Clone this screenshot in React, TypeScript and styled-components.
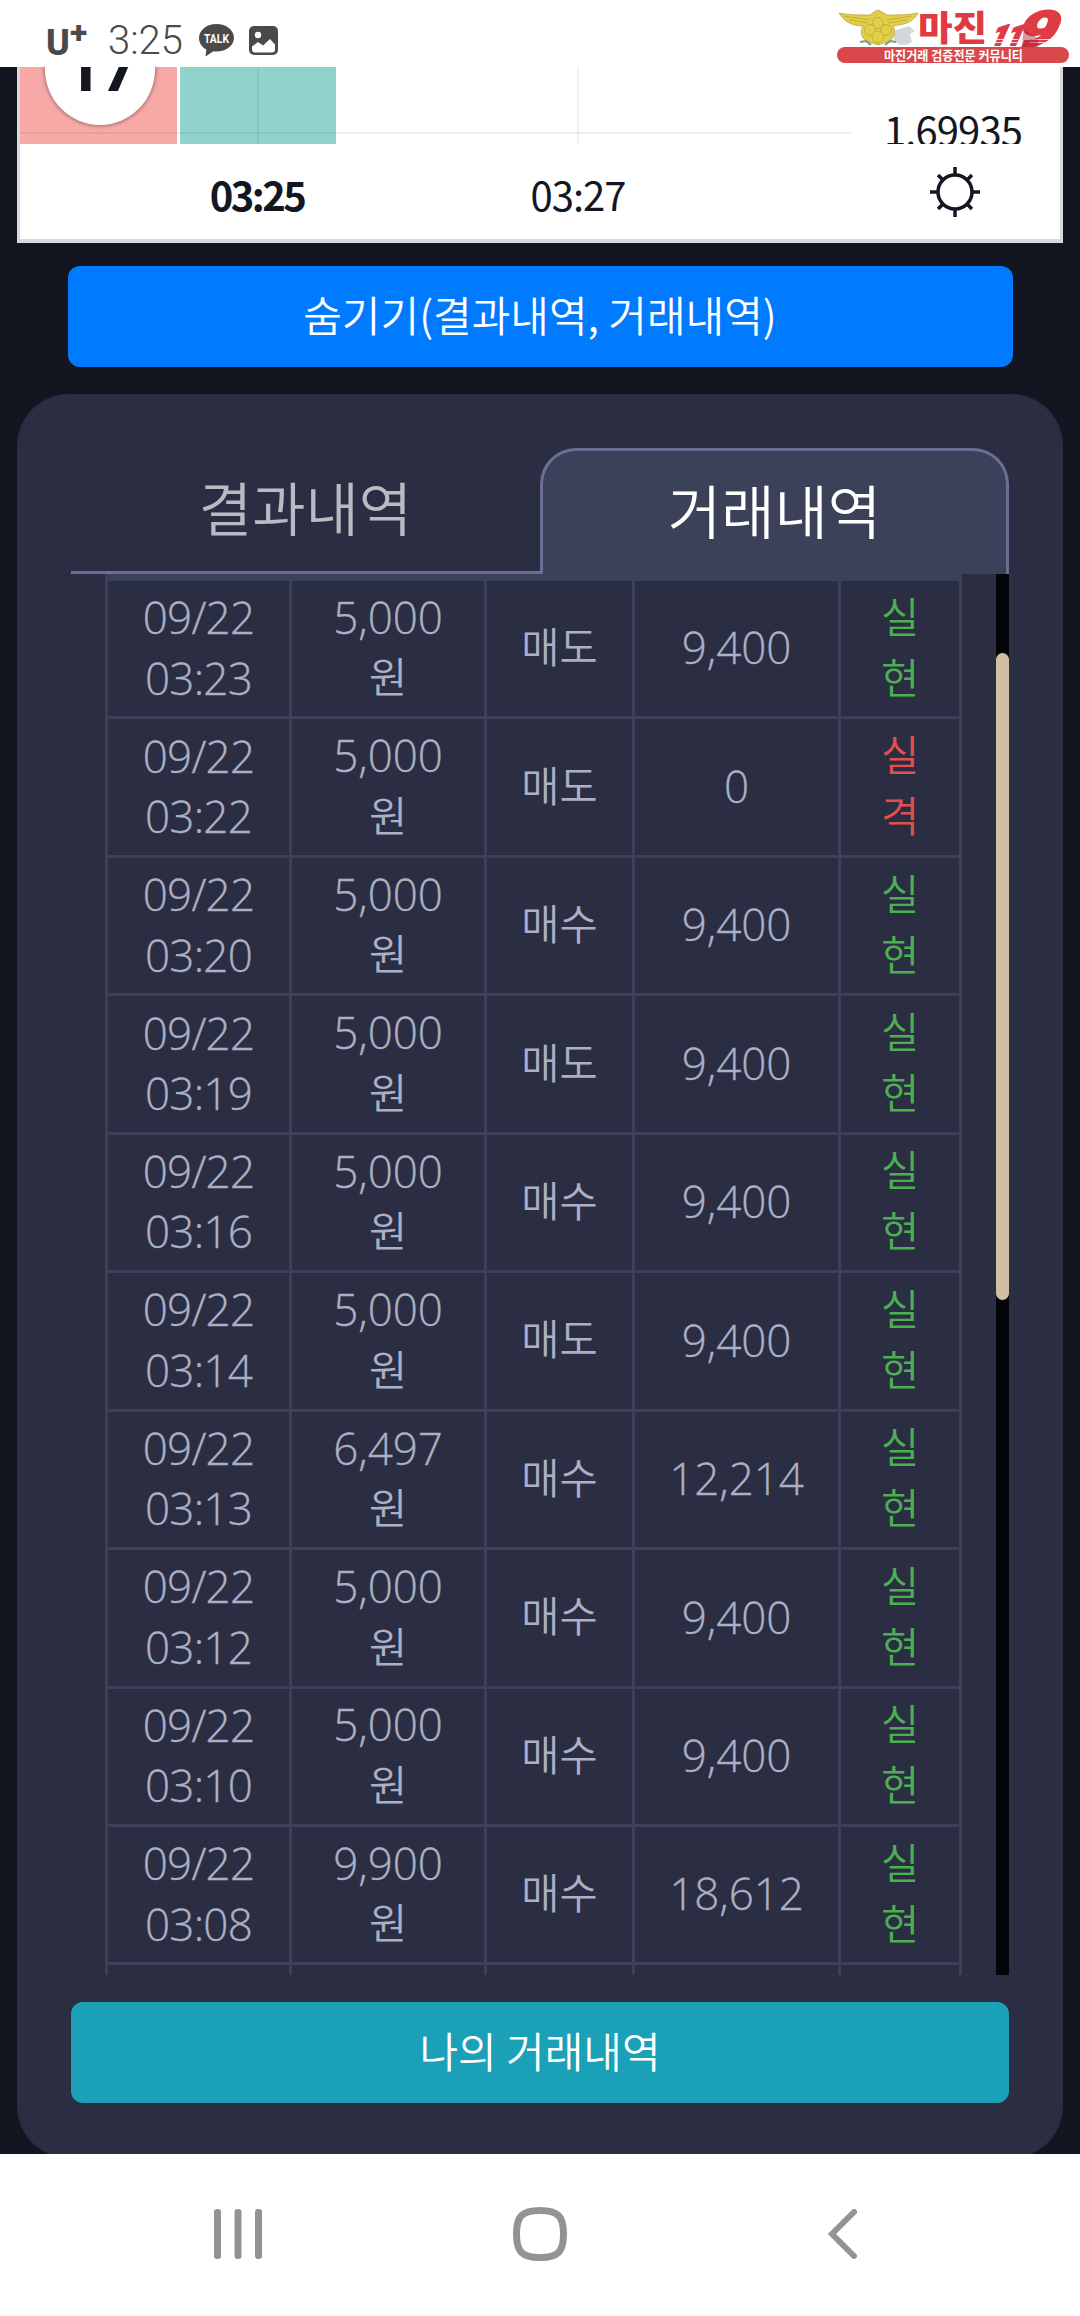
import { useState } from "react";
import styled, { createGlobalStyle } from "styled-components";

interface ITrade {
  time: string;
  amount: string;
  side: string;
  profit: string;
  isWin: boolean;
}

const trades: ITrade[] = [
  { time: "03:23", amount: "5,000", side: "매도", profit: "9,400", isWin: true },
  { time: "03:22", amount: "5,000", side: "매도", profit: "0", isWin: false },
  { time: "03:20", amount: "5,000", side: "매수", profit: "9,400", isWin: true },
  { time: "03:19", amount: "5,000", side: "매도", profit: "9,400", isWin: true },
  { time: "03:16", amount: "5,000", side: "매수", profit: "9,400", isWin: true },
  { time: "03:14", amount: "5,000", side: "매도", profit: "9,400", isWin: true },
  { time: "03:13", amount: "6,497", side: "매수", profit: "12,214", isWin: true },
  { time: "03:12", amount: "5,000", side: "매수", profit: "9,400", isWin: true },
  { time: "03:10", amount: "5,000", side: "매수", profit: "9,400", isWin: true },
  { time: "03:08", amount: "9,900", side: "매수", profit: "18,612", isWin: true },
];

const TalkIcon = () => (
  <svg width="35" height="33" viewBox="0 0 35 33">
    <path
      d="M17.5 0C7.800 0 0 6.200 0 14c0 4.900 2.900 9 7.300 11.600L6.500 32.500l8-5.200c1 .1 2 .2 3 .2 9.700 0 17.500-6 17.500-13.700S27.200 0 17.500 0z"
      fill="#4a4a4a"
    />
    <text
      x="17.500"
      y="18.500"
      textAnchor="middle"
      textLength="25"
      lengthAdjust="spacingAndGlyphs"
      fontFamily="Roboto, sans-serif"
      fontSize="12"
      fontWeight="700"
      fill="#fff"
    >
      TALK
    </text>
  </svg>
);

const PictureIcon = () => (
  <svg width="29" height="29" viewBox="0 0 29 29">
    <rect width="29" height="29" rx="5" fill="#4a4a4a" />
    <circle cx="9" cy="9" r="3.200" fill="#fff" />
    <path
      d="M3 20.500l6-4.500 5 3.500 7-6.500 5 5.500v5a3 3 0 0 1-3 3H6a3 3 0 0 1-3-3z"
      fill="#fff"
    />
  </svg>
);

const SunIcon = () => (
  <svg
    width="50"
    height="50"
    viewBox="-25 -25 50 50"
    fill="none"
    stroke="#131722"
    strokeWidth="3.500"
  >
    <circle r="17" />
    {[0, 45, 90, 135, 180, 225, 270, 315].map((angle) => (
      <path
        key={angle}
        d={angle % 90 ? "M0 -17V-24" : "M0 -17V-25"}
        transform={`rotate(${angle})`}
      />
    ))}
  </svg>
);

const CommunityLogo = () => (
  <svg width="234" height="58" viewBox="836 6 234 58" overflow="visible">
    <path d="M893 31l16-5 6 5-5 3 2 8c-8 5-15 3-18-2z" fill="#c9cdcf" opacity="0.800" />
    <g fill="#e3cf45" stroke="#b9a44a" strokeWidth="0.800">
      <path d="M839 13c9 2 20 2 31 2l4-3 4-2 4 2 5 3c11 0 22 0 31-2-3 6-8 9-14 11l-11 2c3 5 1 11-3 15l-12 4-12-4c-5-4-6-10-3-15-12 0-19-5-24-13z" />
      <circle cx="878" cy="23" r="5.500" />
      <circle cx="870" cy="30" r="5.500" />
      <circle cx="886" cy="30" r="5.500" />
      <circle cx="878" cy="37" r="6" />
      <path d="M844 16l25 4M849 20l19 3M912 16l-25 4M907 20l-19 3" fill="none" />
    </g>
    <path
      d="M860 42l6-1 5 4M896 42l-6-1-5 4"
      stroke="#7f9a78"
      strokeWidth="2"
      fill="none"
    />
    <text
      x="918"
      y="41"
      textLength="69"
      lengthAdjust="spacingAndGlyphs"
      fontFamily="'Noto Sans CJK KR', sans-serif"
      fontSize="35"
      fontWeight="900"
      fill="#e23a42"
    >
      마진
    </text>
    <g
      fontFamily="Roboto, sans-serif"
      fontWeight="900"
      fill="#df3b45"
      stroke="#df3b45"
    >
      <text
        transform="translate(989 45) skewX(-24)"
        fontSize="28"
        textLength="31"
        lengthAdjust="spacingAndGlyphs"
        strokeWidth="2"
      >
        11
      </text>
      <text
        transform="translate(1012 47) skewX(-24)"
        fontSize="51"
        textLength="40"
        lengthAdjust="spacingAndGlyphs"
        strokeWidth="1.500"
      >
        9
      </text>
    </g>
    <path
      d="M988 39.500h30M1032 39.500h20M987 42.500h30M1030 42.500h20"
      stroke="#fff"
      strokeWidth="0.800"
    />
    <path d="M1024 30l14 8v17h-11c-5-4-6-14-3-25z" fill="#a9202f" opacity="0.450" />
    <rect x="837" y="47" width="232" height="16" rx="8" fill="#d8474a" />
    <text
      x="884"
      y="59.500"
      textLength="139"
      lengthAdjust="spacingAndGlyphs"
      fontFamily="'Noto Sans CJK KR', sans-serif"
      fontSize="13"
      fontWeight="700"
      fill="#fff"
    >
      마진거래 검증전문 커뮤니티
    </text>
  </svg>
);

const App = () => {
  const [tab, setTab] = useState("trade");

  return (
    <Screen>
      <GlobalStyle />
      <StatusBar>
        <Carrier>U</Carrier>
        <CarrierPlus>+</CarrierPlus>
        <Clock>3:25</Clock>
        <TalkIcon />
        <PictureIcon />
      </StatusBar>
      <LogoBadge>
        <CommunityLogo />
      </LogoBadge>

      <Page>
        <ChartCard>
          <Plot>
            <Candle color="#f7a9a7" />
            <Candle color="#92d2cc" />
            <GridLineX />
            <GridLineY left={237} />
            <GridLineY left={557} />
            <Countdown>17</Countdown>
            <Price>1.69935</Price>
          </Plot>
          <TimeAxis>
            <TimeLabel isCurrent>03:25</TimeLabel>
            <TimeLabel>03:27</TimeLabel>
            <SunIcon />
          </TimeAxis>
        </ChartCard>

        <HideButton>숨기기(결과내역, 거래내역)</HideButton>

        <Panel>
          <Tabs>
            <Tab isActive={tab === "result"} onClick={() => setTab("result")}>
              결과내역
            </Tab>
            <Tab isActive={tab === "trade"} onClick={() => setTab("trade")}>
              거래내역
            </Tab>
          </Tabs>
          <ScrollArea>
            <TradeTable>
              <HeadEdge />
              {trades.map((trade) => (
                <TradeRow key={trade.time}>
                  <Cell>
                    <span>09/22</span>
                    <span>{trade.time}</span>
                  </Cell>
                  <Cell>
                    <Amount>{trade.amount}</Amount>
                    <Hangul>원</Hangul>
                  </Cell>
                  <Cell>
                    <Hangul>{trade.side}</Hangul>
                  </Cell>
                  <Cell>
                    <Amount>{trade.profit}</Amount>
                  </Cell>
                  <Cell>
                    <Result isWin={trade.isWin}>실</Result>
                    <Result isWin={trade.isWin}>{trade.isWin ? "현" : "격"}</Result>
                  </Cell>
                </TradeRow>
              ))}
              <TradeRow>
                <Cell />
                <Cell />
                <Cell />
                <Cell />
                <Cell />
              </TradeRow>
            </TradeTable>
            <ScrollTrack>
              <ScrollThumb />
            </ScrollTrack>
          </ScrollArea>
          <MyTradeButton>나의 거래내역</MyTradeButton>
        </Panel>
      </Page>

      <NavBar>
        <svg width="48" height="50" viewBox="0 0 48 50" fill="#939393">
          <rect x="0" width="7" height="50" rx="3" />
          <rect x="20.500" width="7" height="50" rx="3" />
          <rect x="41" width="7" height="50" rx="3" />
        </svg>
        <svg width="54" height="54" viewBox="0 0 54 54">
          <path
            d="M27 3.500C45 3.500 50.500 9 50.500 27S45 50.500 27 50.500 3.500 45 3.500 27 9 3.500 27 3.500z"
            fill="none"
            stroke="#939393"
            strokeWidth="7"
          />
        </svg>
        <svg width="30" height="50" viewBox="0 0 30 50">
          <path
            d="M27 3L5 25l22 22"
            fill="none"
            stroke="#939393"
            strokeWidth="6"
            strokeLinecap="round"
          />
        </svg>
      </NavBar>
    </Screen>
  );
};

export default App;

const GlobalStyle = createGlobalStyle`
  * {
    box-sizing: border-box;
  }

  body {
    margin: 0;
    background: #fff;
    font-family: "Noto Sans CJK KR", sans-serif;
  }
`;

const Screen = styled.div`
  position: relative;
  width: 1080px;
  height: 2316px;
  display: flex;
  flex-direction: column;
  overflow: hidden;
`;

const StatusBar = styled.header`
  height: 67px;
  flex: none;
  display: flex;
  align-items: center;
  padding: 14px 0 0 46px;
  color: #4a4a4a;

  svg:first-of-type {
    margin-left: 17px;
  }

  svg + svg {
    margin-left: 15px;
  }
`;

const Carrier = styled.div`
  width: 24px;
  padding-top: 4px;
  font-family: Roboto, sans-serif;
  font-size: 36px;
  font-weight: 800;
  line-height: 40px;
`;

const CarrierPlus = styled.div`
  width: 38px;
  padding-bottom: 18px;
  font-family: Roboto, sans-serif;
  font-size: 32px;
  font-weight: 800;
  line-height: 30px;
`;

const Clock = styled.div`
  width: 74px;
  font-family: Roboto, sans-serif;
  font-size: 40px;
  font-weight: 300;
  line-height: 48px;
`;

const LogoBadge = styled.div`
  position: absolute;
  top: 6px;
  left: 836px;
  z-index: 1;
  line-height: 0;
`;

const Page = styled.main`
  height: 2087px;
  flex: none;
  display: flex;
  flex-direction: column;
  align-items: center;
  background: #131520;
  overflow: hidden;
`;

const ChartCard = styled.section`
  width: 1046px;
  height: 176px;
  flex: none;
  border: solid #d8dadd;
  border-width: 0 3px 4px;
  background: #fff;
`;

const Plot = styled.div`
  position: relative;
  height: 77px;
  display: flex;
  gap: 3px;
  overflow: hidden;
`;

const Candle = styled.div<{ color: string }>`
  width: 156.5px;
  background: ${(props) => props.color};
`;

const GridLineX = styled.div`
  position: absolute;
  left: 0;
  top: 65px;
  width: 831px;
  height: 2px;
  background: rgba(42, 46, 57, 0.07);
`;

const GridLineY = styled.div<{ left: number }>`
  position: absolute;
  left: ${(props) => props.left}px;
  top: 0;
  width: 2px;
  height: 77px;
  background: rgba(42, 46, 57, 0.07);
`;

const Countdown = styled.div`
  position: absolute;
  left: 25px;
  top: -54px;
  width: 110px;
  height: 112px;
  border-radius: 50%;
  background: #fff;
  box-shadow: 0 0 3px 2px rgba(90, 60, 60, 0.35);
  color: #131722;
  padding-left: 3px;
  font-family: Roboto, sans-serif;
  font-size: 62px;
  font-weight: 800;
  line-height: 113px;
  text-align: center;
`;

const Price = styled.div`
  margin: 29px 0 0 auto;
  padding-right: 38px;
  color: #131722;
  font-size: 40px;
  letter-spacing: -0.9px;
  line-height: 66px;
`;

const TimeAxis = styled.div`
  height: 95px;
  display: grid;
  grid-template-columns: 398px 320px 1fr;
  align-items: center;

  svg {
    margin-left: 192px;
  }
`;

const TimeLabel = styled.div<{ isCurrent?: boolean }>`
  padding: 5px 0 0 ${(props) => (props.isCurrent ? 76 : 0)}px;
  color: #131722;
  font-size: 40px;
  font-weight: ${(props) => (props.isCurrent ? 700 : 400)};
  letter-spacing: ${(props) => (props.isCurrent ? -2.6 : -1)}px;
  text-align: center;
`;

const Button = styled.button`
  height: 101px;
  flex: none;
  border: 0;
  border-radius: 12px;
  padding: 0 0 6px;
  color: #fff;
  font-family: "Noto Sans CJK KR", sans-serif;
  font-size: 42px;
  font-weight: 350;
  cursor: pointer;
`;

const HideButton = styled(Button)`
  width: 945px;
  margin-top: 23px;
  background: #007bff;
`;

const MyTradeButton = styled(Button)`
  width: 938px;
  margin-top: 27px;
  background: #1aa1b8;
`;

const Panel = styled.section`
  width: 1046px;
  height: 1764px;
  flex: none;
  margin-top: 27px;
  padding: 54px 54px 0;
  border-radius: 52px;
  background: #2b2e42;
`;

const Tabs = styled.div`
  height: 126px;
  display: flex;
`;

const Tab = styled.div<{ isActive: boolean }>`
  flex: ${(props) => (props.isActive ? "0 0 469px" : "1")};
  border: solid #6a7095;
  border-width: ${(props) => (props.isActive ? "3px 3px 0" : "0 0 3px")};
  border-radius: ${(props) => (props.isActive ? "36px 36px 0 0" : "0")};
  background: ${(props) => (props.isActive ? "#3b4159" : "transparent")};
  color: ${(props) => (props.isActive ? "#fff" : "#b9bbc3")};
  font-size: 58px;
  font-weight: 350;
  line-height: 116px;
  text-align: center;
  cursor: pointer;
`;

const ScrollArea = styled.div`
  height: 1401px;
  display: flex;
  justify-content: space-between;
  padding-left: 34px;
  overflow: hidden;
`;

const TradeTable = styled.div`
  width: 857px;
  flex: none;
`;

const HeadEdge = styled.div`
  height: 7px;
  background: #3b4159;
`;

const TradeRow = styled.div`
  height: 138.45px;
  display: grid;
  grid-template-columns: 184px 195px 148px 206px 1fr;
  border: solid #3d4158;
  border-width: 0 3px 3px 0;
`;

const Cell = styled.div`
  display: flex;
  flex-direction: column;
  align-items: center;
  justify-content: center;
  border-left: 3px solid #3d4158;
  padding-bottom: 2px;
  color: #abb0c4;
  font-family: "Open Sans", sans-serif;
  font-size: 44px;
  font-weight: 350;
  letter-spacing: -0.8px;
  line-height: 60.5px;
  -webkit-text-stroke: 0.3px currentColor;
`;

const Amount = styled.span`
  letter-spacing: -0.1px;
`;

const Hangul = styled.span`
  padding-bottom: 4px;
  font-family: "Noto Sans CJK KR", sans-serif;
  font-size: 41.5px;
  letter-spacing: 0;
  line-height: 57px;
  -webkit-text-stroke: 0;
`;

const Result = styled(Hangul)<{ isWin: boolean }>`
  color: ${(props) => (props.isWin ? "#4caf50" : "#e0504f")};
`;

const ScrollTrack = styled.div`
  width: 13px;
  padding-top: 79px;
  background: #040508;
`;

const ScrollThumb = styled.div`
  height: 647px;
  border-radius: 7px;
  background: #cfbfa5;
`;

const NavBar = styled.nav`
  height: 162px;
  flex: none;
  display: grid;
  grid-template-columns: 299px 314px 1fr;
  align-items: center;
  padding: 0 0 2px 214px;
  background: #fff;
`;
